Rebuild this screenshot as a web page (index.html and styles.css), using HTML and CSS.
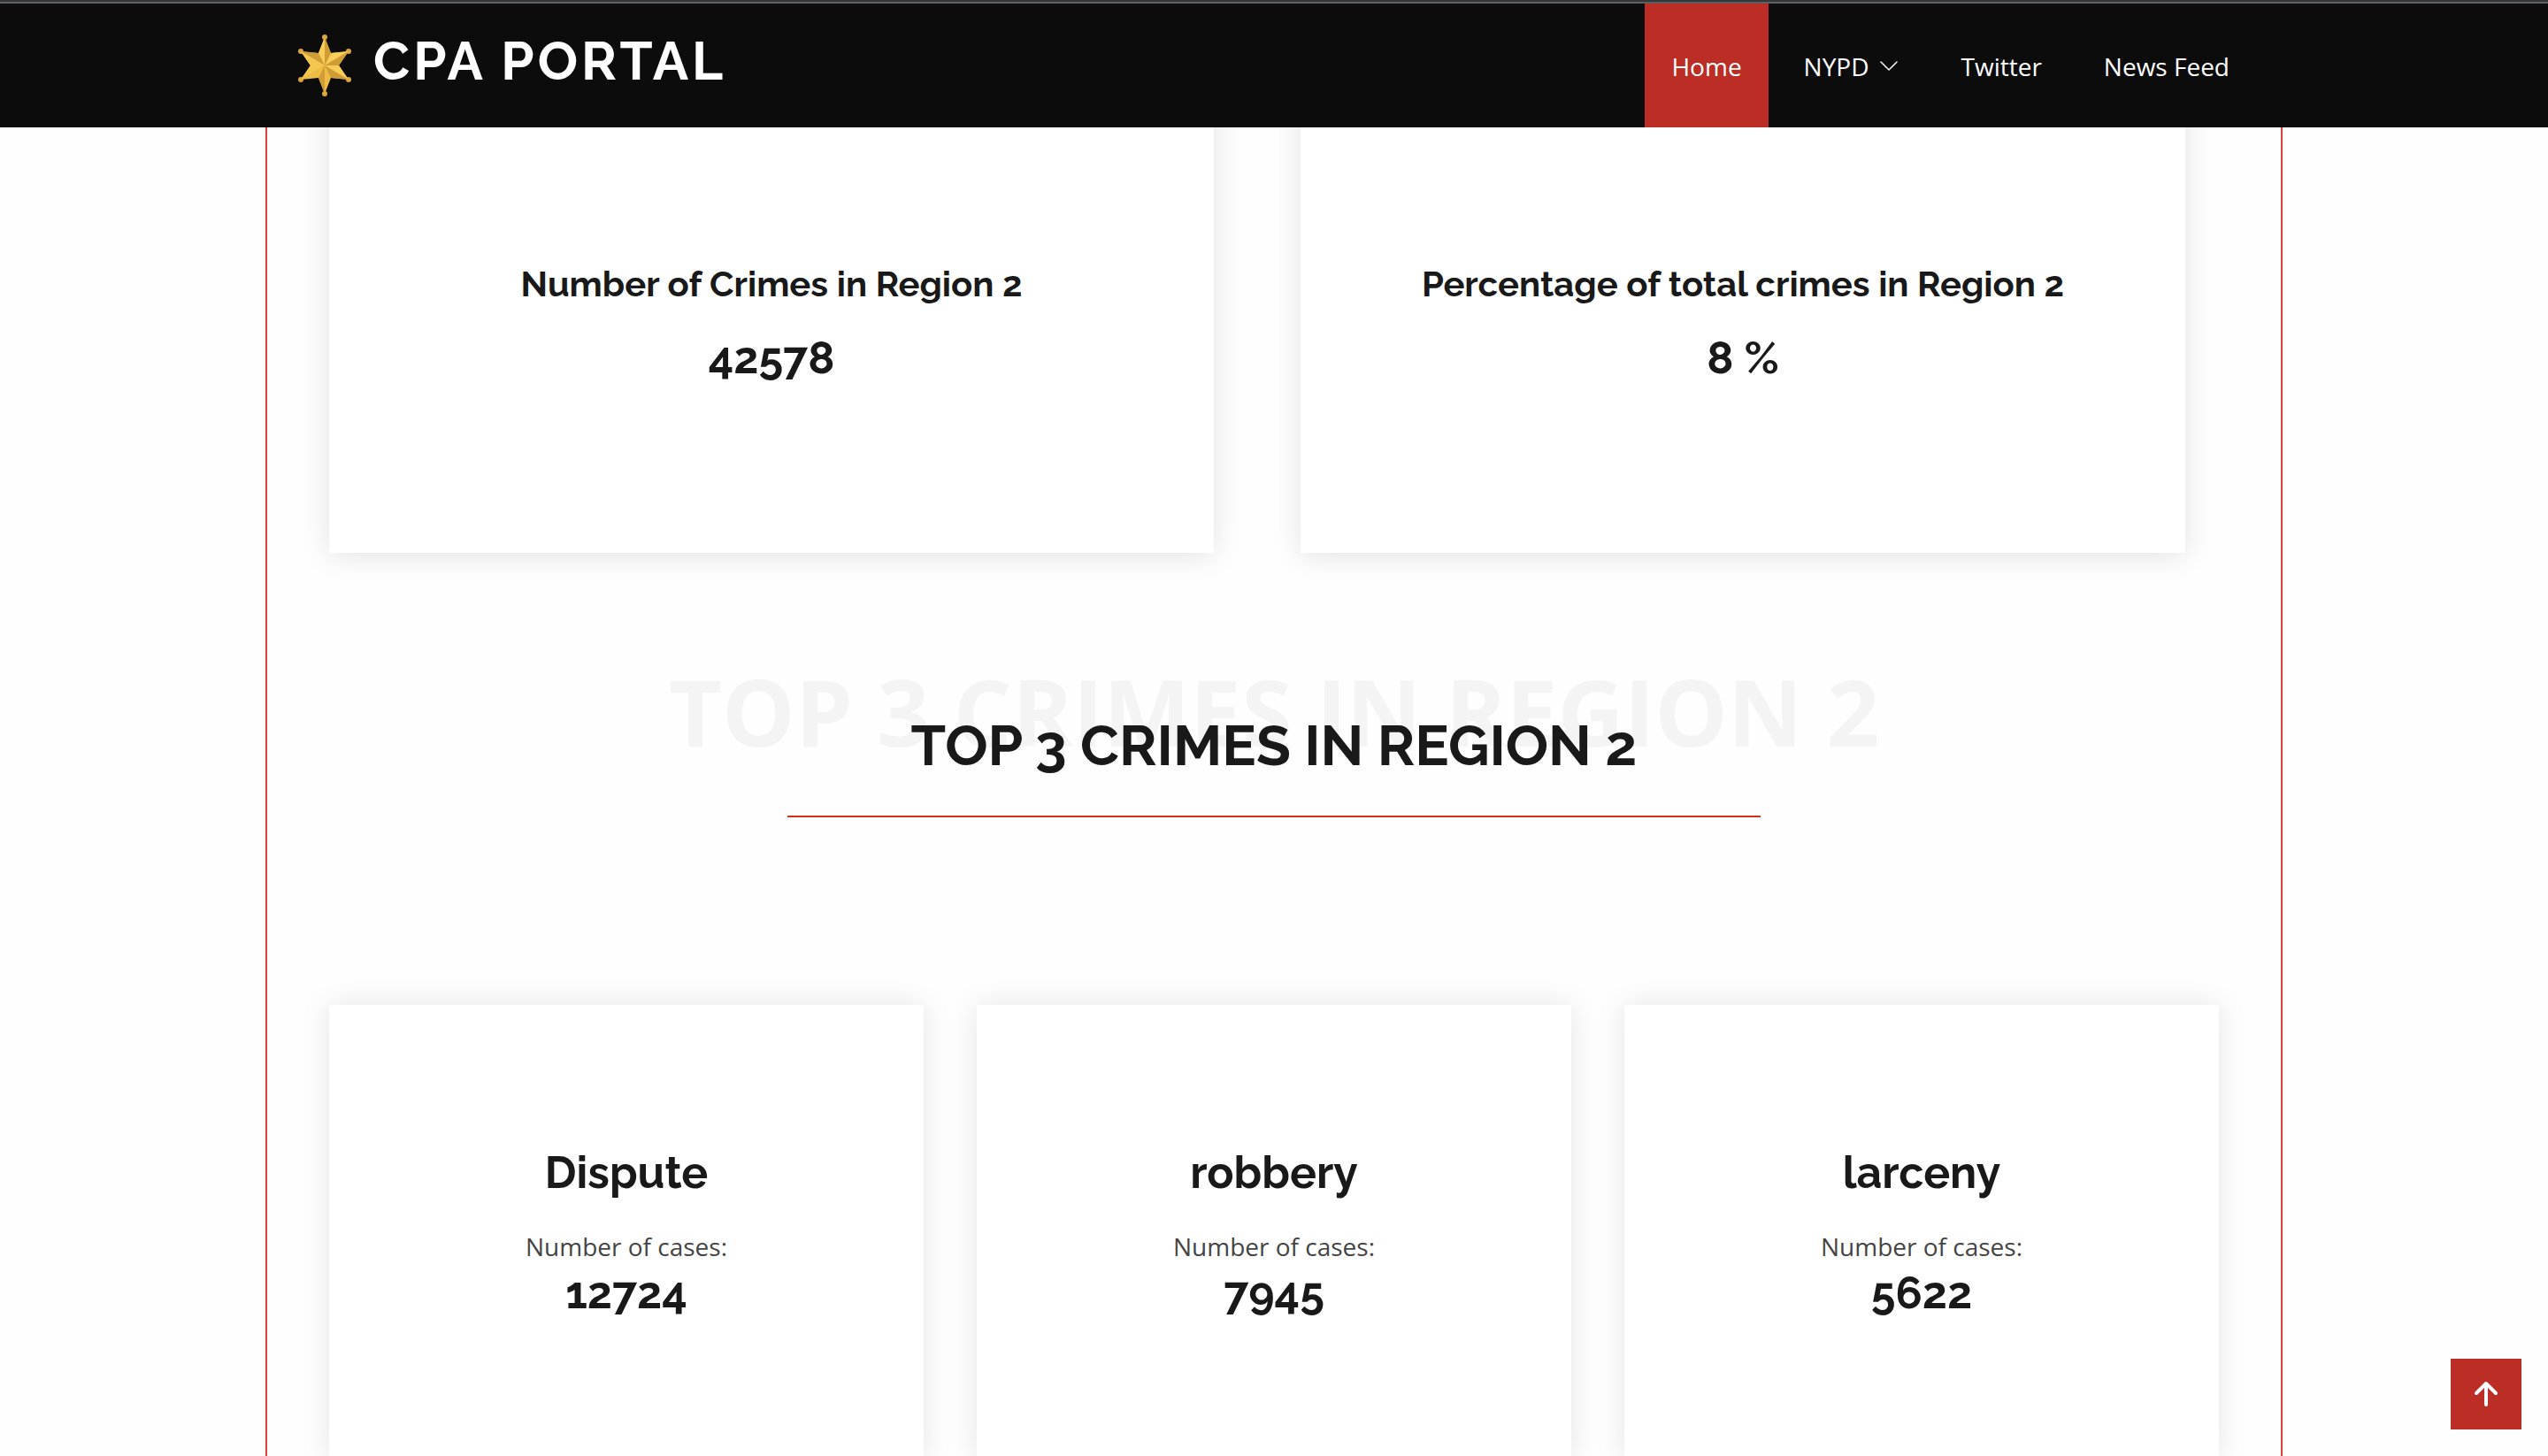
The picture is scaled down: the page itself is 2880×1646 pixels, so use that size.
FILE: index.html
```html
<!DOCTYPE html>
<html lang="en">
<head>
  <meta charset="utf-8">
  <meta name="viewport" content="width=device-width, initial-scale=1">
  <title>CPA Portal</title>
  <link rel="stylesheet" href="styles.css">
</head>
<body>
  <header class="header">
    <div class="header-inner">
      <a class="logo" href="#">
        <svg class="logo-badge" viewBox="0 0 100 100" aria-hidden="true">
          <g fill="#dca63a">
            <circle cx="47" cy="22" r="3"/><circle cx="74" cy="38" r="3"/><circle cx="74" cy="70" r="3"/>
            <circle cx="47" cy="86" r="3"/><circle cx="20" cy="70" r="3"/><circle cx="20" cy="38" r="3"/>
          </g>
          <path fill="#eebc45" d="M47 22 54 40 74 38 63 54 74 70 54 68 47 86 40 68 20 70 31 54 20 38 40 40z"/>
          <path fill="#f8ce58" d="M47 54 40 40 47 22zM47 54 54 40 74 38zM47 54 31 54 20 38zM47 54 63 54 74 70z"/>
          <path fill="#d09c35" d="M47 54V22L54 40zM47 54 74 38 63 54zM47 54 74 70 54 68zM47 54V86L40 68zM47 54 20 70 31 54zM47 54 20 38 40 40z"/>
          <path fill="#f3c650" d="M47 54 31 54 20 70zM47 54 20 38 31 54z"/>
        </svg>
        <span class="logo-text">CPA PORTAL</span>
      </a>
      <nav class="nav">
        <a class="nav-link active" href="#">Home</a>
        <a class="nav-link" href="#">NYPD
          <svg class="chevron" viewBox="0 0 20 12" aria-hidden="true"><path d="M1 1 10 10 19 1" fill="none" stroke="currentColor" stroke-width="1.5" stroke-linecap="round"/></svg>
        </a>
        <a class="nav-link" href="#">Twitter</a>
        <a class="nav-link" href="#">News Feed</a>
      </nav>
    </div>
  </header>

  <main class="container">
    <section class="stats">
      <article class="card stat-card">
        <h4 class="stat-title">Number of Crimes in Region 2</h4>
        <p class="figure">42578</p>
      </article>
      <article class="card stat-card">
        <h4 class="stat-title">Percentage of total crimes in Region 2</h4>
        <p class="figure">8 %</p>
      </article>
    </section>

    <section class="top-crimes">
      <div class="section-title">
        <span class="ghost" aria-hidden="true">TOP 3 CRIMES IN REGION 2</span>
        <h2 class="section-heading">TOP 3 CRIMES IN REGION 2</h2>
      </div>
      <div class="crimes">
        <article class="card crime-card">
          <h3 class="crime-name">Dispute</h3>
          <p class="label">Number of cases:</p>
          <p class="figure">12724</p>
        </article>
        <article class="card crime-card">
          <h3 class="crime-name">robbery</h3>
          <p class="label">Number of cases:</p>
          <p class="figure">7945</p>
        </article>
        <article class="card crime-card">
          <h3 class="crime-name">larceny</h3>
          <p class="label">Number of cases:</p>
          <p class="figure">5622</p>
        </article>
      </div>
    </section>
  </main>

  <a class="back-to-top" href="#" aria-label="Back to top">
    <svg class="arrow" viewBox="0 0 28 32" aria-hidden="true"><path d="M14 28V4M3 15 14 4 25 15" fill="none" stroke="currentColor" stroke-width="4" stroke-linecap="round" stroke-linejoin="round"/></svg>
  </a>
</body>
</html>
```
FILE: styles.css
```css
* { box-sizing: border-box; }

body {
  margin: 0;
  height: 100vh;
  overflow: hidden;
  background: #fefefe;
  color: #444;
  font-family: "Open Sans", sans-serif;
  font-size: 28px;
}

h2, h3, h4, p { margin: 0; }
a { color: inherit; text-decoration: none; }

.header {
  position: fixed;
  inset: 0 0 auto;
  z-index: 10;
  border-top: 2px solid #35363a;
  background: #0c0c0c;
  color: #fff;
}
.header-inner {
  display: flex;
  justify-content: space-between;
  height: 142px;
  padding: 0 330px 0 320px;
  border-top: 2px solid #5f6061;
}

.logo { display: flex; align-items: flex-start; gap: 2px; }
.logo-badge { width: 100px; height: 100px; margin-top: 16px; }
.logo-text {
  font-family: Raleway, Lato, sans-serif;
  font-size: 60px;
  font-weight: 700;
  line-height: 72px;
  letter-spacing: 4px;
  margin-top: 29px;
}

.nav { display: flex; gap: 10px; }
.nav-link {
  display: flex;
  align-items: center;
  gap: 12px;
  padding: 2px 30px 0;
  line-height: 48px;
}
.nav-link:nth-child(2) { padding-right: 32px; }
.nav-link.active { background: #bb2d25; }
.chevron { width: 20px; height: 12px; }

.container {
  max-width: 2280px;
  margin: 0 auto;
  padding: 104px 70px 0;
  border: solid #dc4238;
  border-width: 0 2px;
}

.card {
  display: flex;
  flex-direction: column;
  align-items: center;
  background: #fff;
  color: #191919;
  text-align: center;
}

.stats {
  display: grid;
  grid-template-columns: 1fr 1fr;
  gap: 98px;
  padding-right: 38px;
}
.stat-card {
  gap: 30px;
  padding: 193px 30px 190px;
  box-shadow: 0 4px 32px rgba(0, 0, 0, .11);
}
.stat-title {
  font-family: Raleway, Lato, sans-serif;
  font-size: 40px;
  font-weight: 700;
  line-height: 48px;
}
.figure {
  font-family: Raleway, Lato, sans-serif;
  font-size: 50px;
  font-weight: 700;
  line-height: 60px;
  font-variant-numeric: oldstyle-nums;
}

.top-crimes { padding-top: 178px; }
.section-title {
  position: relative;
  margin-bottom: 212px;
  text-align: center;
}
.ghost {
  position: absolute;
  inset: -69px 0 auto;
  z-index: -1;
  color: #f4f4f4;
  font-size: 104px;
  font-weight: 700;
  line-height: 140px;
}
.section-heading {
  color: #191919;
  font-family: Raleway, Lato, sans-serif;
  font-size: 64px;
  font-weight: 700;
  line-height: 80px;
  font-variant-numeric: oldstyle-nums;
}
.section-heading::after {
  content: "";
  display: block;
  width: 1100px;
  height: 2px;
  margin: 39px auto 0;
  background: #d62f20;
}

.crimes {
  display: grid;
  grid-template-columns: repeat(3, 1fr);
  gap: 60px;
}
.crime-card {
  padding: 160px 30px;
  box-shadow: 0 0 32px rgba(0, 0, 0, .1);
}
.crime-name {
  margin-bottom: 30px;
  font-family: Raleway, Lato, sans-serif;
  font-size: 50px;
  font-weight: 700;
  line-height: 60px;
}
.label { color: #444; line-height: 46px; }

.back-to-top {
  position: fixed;
  right: 30px;
  bottom: 30px;
  display: grid;
  place-items: center;
  width: 80px;
  height: 80px;
  background: #bb2d25;
  color: #fff;
}
.arrow { width: 28px; height: 32px; }
```
